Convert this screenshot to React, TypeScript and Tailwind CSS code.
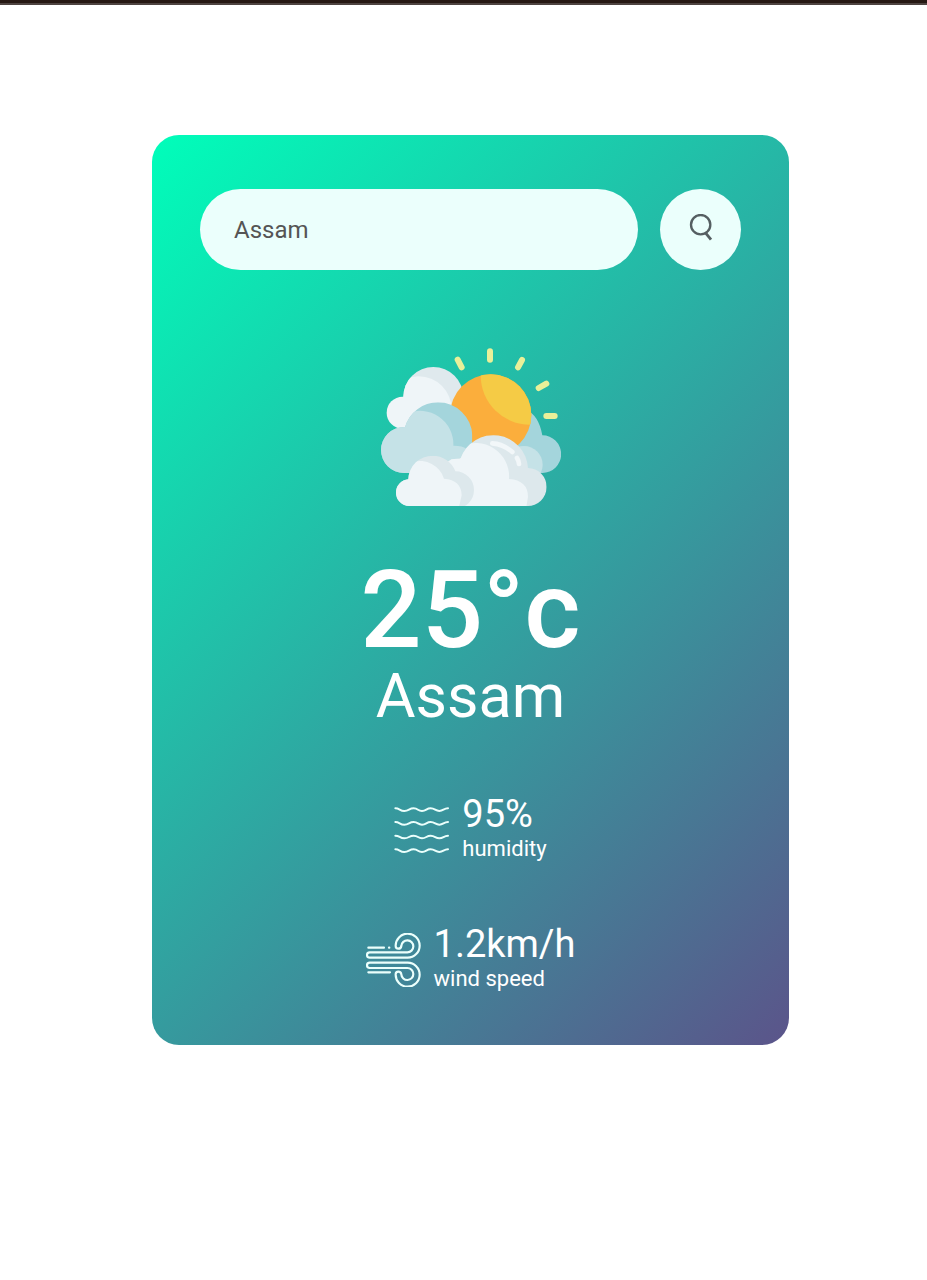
import { useState, type ReactNode } from "react";

function SearchIcon() {
  return (
    <svg viewBox="0 0 81 81" className="size-[27px]" fill="none" stroke="#555f62" strokeWidth="7" aria-hidden="true">
      <circle cx="41" cy="32" r="29" />
      <path d="M55 56 72 77" strokeWidth="8.5" />
    </svg>
  );
}

function PartlyCloudy() {
  return (
    <svg viewBox="33 38 540 474" className="h-[158px] w-[180px]" role="img" aria-label="Partly cloudy">
      <defs>
        <clipPath id="back">
          <circle cx="190" cy="185" r="90" />
        </clipPath>
        <clipPath id="sun">
          <circle cx="362" cy="239" r="122" />
        </clipPath>
        <clipPath id="blue">
          <circle cx="204" cy="304" r="103" />
          <circle cx="102" cy="344" r="69" />
          <path d="M102 300H307V413H102Z" />
        </clipPath>
        <clipPath id="right">
          <path d="M400 413V225H470Q506 240 517 300A56 56 0 0 1 517 413Z" />
        </clipPath>
        <clipPath id="front">
          <path d="M200 512V400L245 372 272 369A104 104 0 0 1 474 398 57 57 0 0 1 472 512Z" />
        </clipPath>
        <clipPath id="small">
          <circle cx="188" cy="434" r="73" />
          <circle cx="118" cy="472" r="40" />
          <circle cx="256" cy="464" r="56" />
          <path d="M118 440H274V512H118Z" />
        </clipPath>
      </defs>
      <circle cx="190" cy="185" r="90" fill="#dfe9ed" />
      <circle cx="98" cy="232" r="48" fill="#eff5f8" />
      <circle cx="146" cy="222" r="99" fill="#eff5f8" clipPath="url(#back)" />
      <g clipPath="url(#right)">
        <path d="M400 200H580V420H400Z" fill="#a4d5dc" />
        <circle cx="462" cy="388" r="56" fill="#c5e2e7" />
      </g>
      <circle cx="362" cy="239" r="122" fill="#fbae3c" />
      <circle cx="480" cy="120" r="148" fill="#f5cb45" clipPath="url(#sun)" />
      <g clipPath="url(#blue)">
        <path d="M30 200H320V420H30Z" fill="#a4d5dc" />
        <path d="M30 420V260L110 235A100 100 0 0 1 250 331Q300 330 308 370V420Z" fill="#c5e2e7" />
      </g>
      <g clipPath="url(#front)">
        <path d="M190 290H540V520H190Z" fill="#dde8ec" />
        <path d="M190 520V370H270V335A100 100 0 0 1 417 431Q474 435 474 485L468 520Z" fill="#eff5f8" />
      </g>
      <path d="M367 324Q400 326 427 350M441 368Q446 376 447 386" fill="none" stroke="#f2f7f9" strokeWidth="14" strokeLinecap="round" />
      <g clipPath="url(#small)">
        <path d="M70 355H320V520H70Z" fill="#dde8ec" />
        <path d="M70 520V400L128 380A76 76 0 0 1 222 430Q274 434 275 480L266 520Z" fill="#eff5f8" />
      </g>
      <g stroke="#e9f099" strokeWidth="18" strokeLinecap="round">
        <path d="M360 48V73M263 73 275 96M456 74 444 96M506 158 529 145M529 242H554" />
      </g>
    </svg>
  );
}

function HumidityIcon() {
  return (
    <svg viewBox="0 0 165 162" className="h-[54px] w-[55px]" fill="none" stroke="#ebfffc" strokeWidth="6" strokeLinecap="round" aria-hidden="true">
      <path d="M4 16C17 16 17 24 31 24S45 16 59 16 71 24 84 24 97 16 110 16 124 24 136 24 149 16 162 16" />
      <path d="M4 57C17 57 17 65 31 65S45 57 59 57 71 65 84 65 97 57 110 57 124 65 136 65 149 57 162 57" />
      <path d="M4 98C17 98 17 106 31 106S45 98 59 98 71 106 84 106 97 98 110 98 124 106 136 106 149 98 162 98" />
      <path d="M4 139C17 139 17 147 31 147S45 139 59 139 71 147 84 147 97 139 110 139 124 147 136 147 149 139 162 139" />
    </svg>
  );
}

function WindIcon() {
  return (
    <svg viewBox="32 38 165 162" className="h-[54px] w-[55px]" fill="none" stroke="#ebfffc" strokeWidth="6.5" strokeLinecap="round" strokeLinejoin="round" aria-hidden="true">
      <path d="M43 112H157A36 36 0 1 0 121 77Q121 85 129 85T138 77A18 18 0 1 1 156 96H43A8 8 0 0 0 43 112Z" />
      <path d="M43 127H157A36 36 0 1 1 121 162Q121 154 129 154T138 162A18 18 0 1 0 156 143H43A8 8 0 0 1 43 127Z" />
      <path d="M39 82H86M101 82H102M39 156H104" />
    </svg>
  );
}

function Detail({ icon, value, label }: { icon: ReactNode; value: string; label: string }) {
  return (
    <div className="flex items-end gap-[13px]">
      <div className="mb-[5px]">{icon}</div>
      <div>
        <p className="text-[38px] leading-[44px]">{value}</p>
        <p className="text-[22px] leading-[26px]">{label}</p>
      </div>
    </div>
  );
}

export default function App() {
  const [city, setCity] = useState("Assam");

  return (
    <div className="min-h-screen bg-white font-['Roboto',sans-serif]">
      <div className="h-[5px] border-b-2 border-[#4e4340] bg-[#261813]" />
      <main className="mt-[130px] pr-[138px] pb-12 pl-[152px]">
        <section className="flex flex-col items-center rounded-[27px] bg-[linear-gradient(135deg,#00feba,#5b548a)] px-12 pt-[54px] pb-[53px] text-white">
          <form className="flex w-full items-center gap-[22px]" onSubmit={(e) => e.preventDefault()}>
            <input
              type="text"
              aria-label="City name"
              value={city}
              onChange={(e) => setCity(e.target.value)}
              spellCheck={false}
              className="h-[81px] min-w-0 flex-1 rounded-full bg-[#ebfffc] px-[34px] text-2xl text-[#555555] outline-none"
            />
            <button
              type="submit"
              aria-label="Search"
              className="flex size-[81px] shrink-0 items-center justify-center rounded-full bg-[#ebfffc] pb-1"
            >
              <SearchIcon />
            </button>
          </form>
          <div className="mt-[78px]">
            <PartlyCloudy />
          </div>
          <h1 className="mt-[50px] text-[108px] leading-[108px] font-medium">25°c</h1>
          <h2 className="text-[61px] leading-[64px]">Assam</h2>
          <div className="mt-16 flex flex-col items-center gap-[60px]">
            <Detail icon={<HumidityIcon />} value="95%" label="humidity" />
            <Detail icon={<WindIcon />} value="1.2km/h" label="wind speed" />
          </div>
        </section>
      </main>
    </div>
  );
}
